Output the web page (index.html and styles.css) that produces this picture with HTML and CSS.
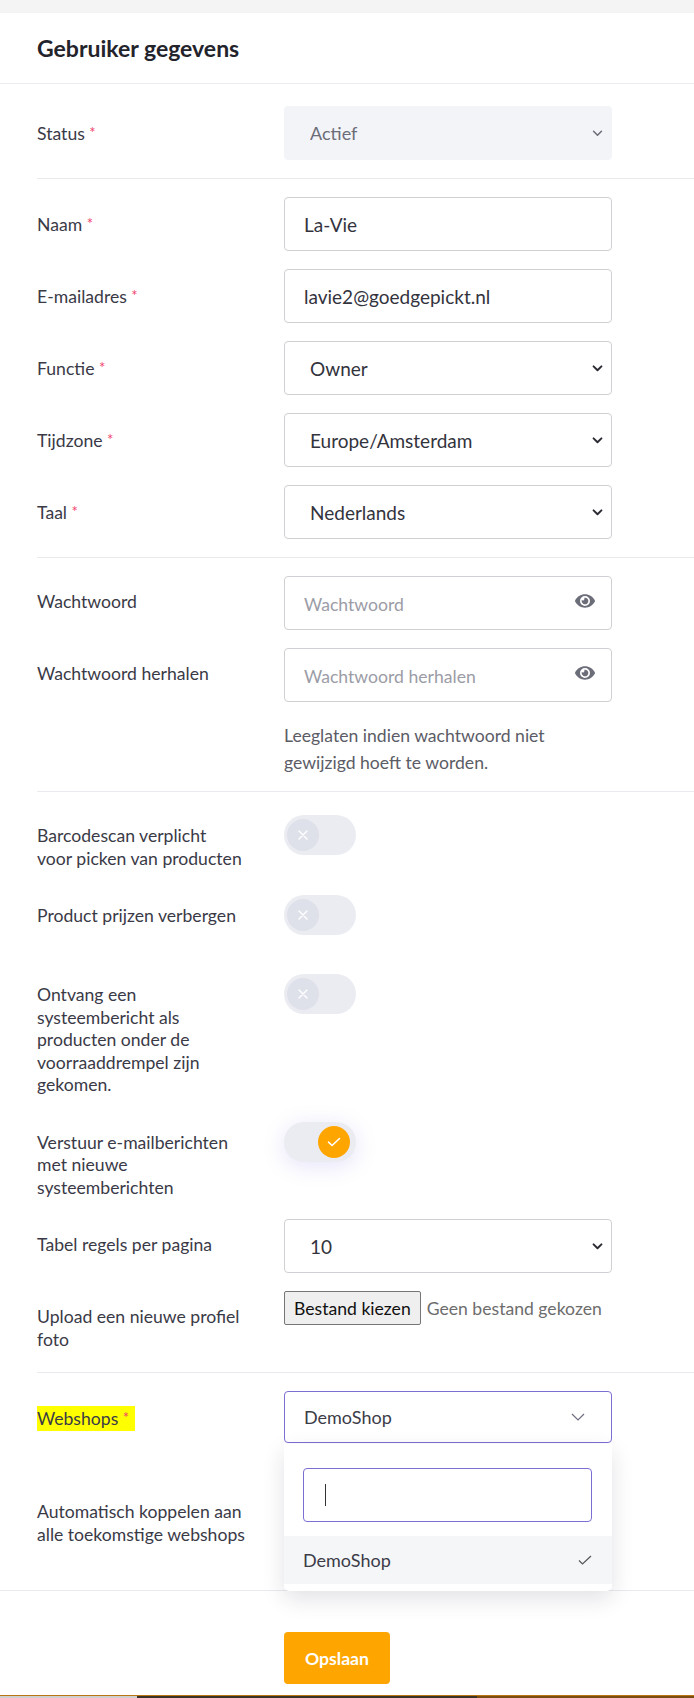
FILE: index.html
```html
<!DOCTYPE html>
<html lang="nl">
<head>
<meta charset="utf-8">
<title>Gebruiker gegevens</title>
<link rel="stylesheet" href="styles.css">
</head>
<body>
<div class="topband"></div>
<div class="card">
  <div class="card-header"><h2 class="card-title">Gebruiker gegevens</h2></div>
  <div class="card-body">
    <div class="group group-first">
      <div class="row">
        <label class="label">Status <span class="req">*</span></label>
        <div class="control">
          <div class="select-wrap">
            <select class="select select-muted"><option>Actief</option></select>
            <svg class="chev chev-muted" viewBox="0 0 12 8" width="11" height="7"><path d="M1.5 1.5l4.5 4.5 4.5-4.5" fill="none" stroke="currentColor" stroke-width="1.8" stroke-linecap="round" stroke-linejoin="round"/></svg>
          </div>
        </div>
      </div>
    </div>

    <div class="group">
      <div class="row">
        <label class="label">Naam <span class="req">*</span></label>
        <div class="control"><input class="input" type="text" value="La-Vie"></div>
      </div>
      <div class="row">
        <label class="label">E-mailadres <span class="req">*</span></label>
        <div class="control"><input class="input" type="text" value="lavie2@goedgepickt.nl"></div>
      </div>
      <div class="row">
        <label class="label">Functie <span class="req">*</span></label>
        <div class="control">
          <div class="select-wrap">
            <select class="select"><option>Owner</option></select>
            <svg class="chev" viewBox="0 0 12 8" width="11" height="7"><path d="M1.5 1.5l4.5 4.5 4.5-4.5" fill="none" stroke="currentColor" stroke-width="2.2" stroke-linecap="round" stroke-linejoin="round"/></svg>
          </div>
        </div>
      </div>
      <div class="row">
        <label class="label">Tijdzone <span class="req">*</span></label>
        <div class="control">
          <div class="select-wrap">
            <select class="select"><option>Europe/Amsterdam</option></select>
            <svg class="chev" viewBox="0 0 12 8" width="11" height="7"><path d="M1.5 1.5l4.5 4.5 4.5-4.5" fill="none" stroke="currentColor" stroke-width="2.2" stroke-linecap="round" stroke-linejoin="round"/></svg>
          </div>
        </div>
      </div>
      <div class="row">
        <label class="label">Taal <span class="req">*</span></label>
        <div class="control">
          <div class="select-wrap">
            <select class="select"><option>Nederlands</option></select>
            <svg class="chev" viewBox="0 0 12 8" width="11" height="7"><path d="M1.5 1.5l4.5 4.5 4.5-4.5" fill="none" stroke="currentColor" stroke-width="2.2" stroke-linecap="round" stroke-linejoin="round"/></svg>
          </div>
        </div>
      </div>
    </div>

    <div class="group group-pw">
      <div class="row">
        <label class="label">Wachtwoord</label>
        <div class="control">
          <div class="pw-wrap">
            <input class="input" type="password" placeholder="Wachtwoord">
            <svg class="eye" viewBox="0 0 576 512" width="20" height="18"><path fill="currentColor" d="M572.52 241.4C518.29 135.59 410.93 64 288 64S57.68 135.64 3.48 241.41a32.35 32.35 0 0 0 0 29.19C57.71 376.41 165.07 448 288 448s230.32-71.64 284.52-177.41a32.35 32.35 0 0 0 0-29.19zM288 400a144 144 0 1 1 144-144 143.93 143.93 0 0 1-144 144zm0-240a95.31 95.31 0 0 0-25.31 3.79 47.85 47.85 0 0 1-66.9 66.9A95.78 95.78 0 1 0 288 160z"/></svg>
          </div>
        </div>
      </div>
      <div class="row">
        <label class="label">Wachtwoord herhalen</label>
        <div class="control">
          <div class="pw-wrap">
            <input class="input" type="password" placeholder="Wachtwoord herhalen">
            <svg class="eye" viewBox="0 0 576 512" width="20" height="18"><path fill="currentColor" d="M572.52 241.4C518.29 135.59 410.93 64 288 64S57.68 135.64 3.48 241.41a32.35 32.35 0 0 0 0 29.19C57.71 376.41 165.07 448 288 448s230.32-71.64 284.52-177.41a32.35 32.35 0 0 0 0-29.19zM288 400a144 144 0 1 1 144-144 143.93 143.93 0 0 1-144 144zm0-240a95.31 95.31 0 0 0-25.31 3.79 47.85 47.85 0 0 1-66.9 66.9A95.78 95.78 0 1 0 288 160z"/></svg>
          </div>
        </div>
      </div>
      <div class="row">
        <div class="label"></div>
        <p class="help">Leeglaten indien wachtwoord niet<br>gewijzigd hoeft te worden.</p>
      </div>
    </div>

    <div class="group group-toggles">
      <div class="row">
        <label class="label">Barcodescan verplicht voor picken van producten</label>
        <div class="control">
          <span class="toggle"><span class="knob"><svg viewBox="0 0 10 10" width="10" height="10"><path d="M1 1l8 8M9 1l-8 8" stroke="#fff" stroke-width="1.4" stroke-linecap="round"/></svg></span></span>
        </div>
      </div>
      <div class="row">
        <label class="label">Product prijzen verbergen</label>
        <div class="control">
          <span class="toggle"><span class="knob"><svg viewBox="0 0 10 10" width="10" height="10"><path d="M1 1l8 8M9 1l-8 8" stroke="#fff" stroke-width="1.4" stroke-linecap="round"/></svg></span></span>
        </div>
      </div>
      <div class="row">
        <label class="label">Ontvang een systeembericht als producten onder de voorraaddrempel zijn gekomen.</label>
        <div class="control">
          <span class="toggle"><span class="knob"><svg viewBox="0 0 10 10" width="10" height="10"><path d="M1 1l8 8M9 1l-8 8" stroke="#fff" stroke-width="1.4" stroke-linecap="round"/></svg></span></span>
        </div>
      </div>
      <div class="row">
        <label class="label">Verstuur e-mailberichten met nieuwe systeemberichten</label>
        <div class="control">
          <span class="toggle toggle-on"><span class="knob"><svg viewBox="0 0 14 10" width="14" height="10"><path d="M1.5 5.2l3.6 3.3 7.4-7" fill="none" stroke="#fff" stroke-width="1.6" stroke-linecap="round" stroke-linejoin="round"/></svg></span></span>
        </div>
      </div>
      <div class="row">
        <label class="label">Tabel regels per pagina</label>
        <div class="control">
          <div class="select-wrap">
            <select class="select"><option>10</option></select>
            <svg class="chev" viewBox="0 0 12 8" width="11" height="7"><path d="M1.5 1.5l4.5 4.5 4.5-4.5" fill="none" stroke="currentColor" stroke-width="2.2" stroke-linecap="round" stroke-linejoin="round"/></svg>
          </div>
        </div>
      </div>
      <div class="row">
        <label class="label">Upload een nieuwe profiel foto</label>
        <div class="control file">
          <button class="file-btn" type="button">Bestand kiezen</button>
          <span class="file-name">Geen bestand gekozen</span>
        </div>
      </div>
    </div>

    <div class="group group-shops">
      <div class="row">
        <label class="label"><span class="mark">Webshops <span class="req">*</span></span></label>
        <div class="control">
          <div class="ms">
            <span>DemoShop</span>
            <svg class="ms-chev" viewBox="0 0 14 8" width="14" height="8"><path d="M1 1l6 6 6-6" fill="none" stroke="#6e6e80" stroke-width="1.2"/></svg>
          </div>
          <div class="ms-drop">
            <div class="ms-search"><span class="caret"></span></div>
            <div class="ms-option">
              <span>DemoShop</span>
              <svg viewBox="0 0 14 10" width="14" height="10"><path d="M1 5.5l3.5 3.5 8.5-8" fill="none" stroke="#555" stroke-width="1.2"/></svg>
            </div>
          </div>
        </div>
      </div>
      <div class="row">
        <label class="label label-wide">Automatisch koppelen aan alle toekomstige webshops</label>
        <div class="control">
          <span class="toggle"><span class="knob"></span></span>
        </div>
      </div>
    </div>
  </div>
  <div class="card-footer">
    <button class="btn-save" type="button">Opslaan</button>
  </div>
</div>
<div class="bottombar"></div>
</body>
</html>
```

FILE: styles.css
```css
* { box-sizing: border-box; }
html, body { margin: 0; padding: 0; }
body {
  font-family: Lato, "Noto Sans", sans-serif;
  font-size: 17.6px;
  color: #3a3a47;
  background: #fff;
  height: 1698px;
  overflow: hidden;
}
.topband { height: 13px; background: #f4f4f5; }
.card { background: #fff; }
.card-header {
  height: 71px;
  display: flex;
  align-items: center;
  padding-left: 37px;
  border-bottom: 1px solid #ebedf2;
}
.card-title { margin: 0; font-size: 23px; font-weight: 700; color: #23232b; }
.card-body { padding-left: 37px; }
.group {
  padding: 18px 0;
  border-bottom: 1px solid #e9eaee;
  display: flex;
  flex-direction: column;
  gap: 18px;
}
.group-first { padding-top: 22px; }
.group-pw { padding-bottom: 15px; }
.row { display: flex; align-items: flex-start; }
.label {
  flex: 0 0 247px;
  padding: 15px 41px 2px 0;
  line-height: 22.5px;
  color: #3a3a47;
}
.label-wide { padding-right: 28px; }
.req { color: #f1416c; font-size: 15px; vertical-align: 2px; }
.control { flex: 0 0 328px; width: 328px; position: relative; }
.input, .select {
  width: 100%;
  height: 54px;
  border: 1px solid #cfd0d4;
  border-radius: 4px;
  background: #fff;
  font-family: inherit;
  font-size: 19px;
  color: #33333d;
  padding: 0 19px;
  outline: none;
}
.input::placeholder { color: #9b9ca6; font-size: 17.6px; }
.select { appearance: none; -webkit-appearance: none; padding-left: 25px; }
.select-muted { background: #f3f4f8; border-color: #f3f4f8; color: #6c6c78; font-size: 18px; }
.select-wrap, .pw-wrap { position: relative; }
.chev { position: absolute; right: 9px; top: 24px; color: #2b2b33; }
.chev-muted { color: #6e6e7a; }
.eye { position: absolute; right: 17px; top: 16px; color: #6b6d78; }
.help {
  margin: 2px 0 0;
  line-height: 27px;
  color: #5b5c66;
}
.toggle {
  display: block;
  position: relative;
  margin: 5px 0 16px;
  width: 72px;
  height: 40px;
  border-radius: 20px;
  background: #ebecf2;
}
.knob {
  position: absolute;
  left: 3px;
  top: 4px;
  width: 32px;
  height: 32px;
  border-radius: 50%;
  background: #dfe1ea;
  display: flex;
  align-items: center;
  justify-content: center;
}
.toggle-on { box-shadow: 0 4px 22px rgba(110, 100, 220, 0.18); }
.toggle-on .knob { left: auto; right: 6px; background: #ffa500; }
.file { display: flex; align-items: center; gap: 6px; height: 34px; }
.file-btn {
  height: 34px;
  padding: 0 9px;
  border: 1px solid #767676;
  border-radius: 2px;
  background: #efefef;
  font-family: inherit;
  font-size: 17.6px;
  color: #111;
}
.file-name { color: #6d6d6d; }
.group-toggles { padding-bottom: 19px; }
.mark { background: #ffff00; padding: 2px 6px 2px 0; }
.ms {
  height: 52px;
  border: 1px solid #7b6fd6;
  border-radius: 4px;
  padding: 0 26px 0 19px;
  display: flex;
  align-items: center;
  justify-content: space-between;
  color: #3c3c48;
  font-size: 18px;
}
.ms-drop {
  position: absolute;
  left: 0;
  right: 0;
  top: 53px;
  z-index: 2;
  background: #fff;
  border-radius: 0 0 5px 5px;
  box-shadow: 0 8px 22px rgba(30, 30, 60, 0.13);
  padding: 24px 0 7px;
}
.ms-search {
  margin: 0 20px 0 19px;
  height: 54px;
  border: 1px solid #7b6fd6;
  border-radius: 4px;
  padding-left: 21px;
  display: flex;
  align-items: center;
}
.caret { width: 1px; height: 22px; background: #333; }
.ms-option {
  margin-top: 14px;
  height: 48px;
  background: #f5f6f8;
  padding: 0 20px 0 19px;
  display: flex;
  align-items: center;
  justify-content: space-between;
  color: #3c3c48;
  font-size: 18px;
}
.group-shops { gap: 43px; padding-bottom: 42px; border-bottom: none; }
.card-footer {
  border-top: 1px solid #e9eaee;
  padding: 41px 0 11px 284px;
}
.btn-save {
  width: 106px;
  height: 52px;
  border: none;
  border-radius: 4px;
  background: #ffa500;
  color: #fff;
  font-family: inherit;
  font-size: 17.6px;
  font-weight: 700;
}
.bottombar {
  height: 3px;
  border-top: 1px solid #b87512;
  background: linear-gradient(to right, #cfcfcf 0, #cfcfcf 137px, #3a3226 137px, #3a3226 477px, #7a4d12 477px);
}
```
